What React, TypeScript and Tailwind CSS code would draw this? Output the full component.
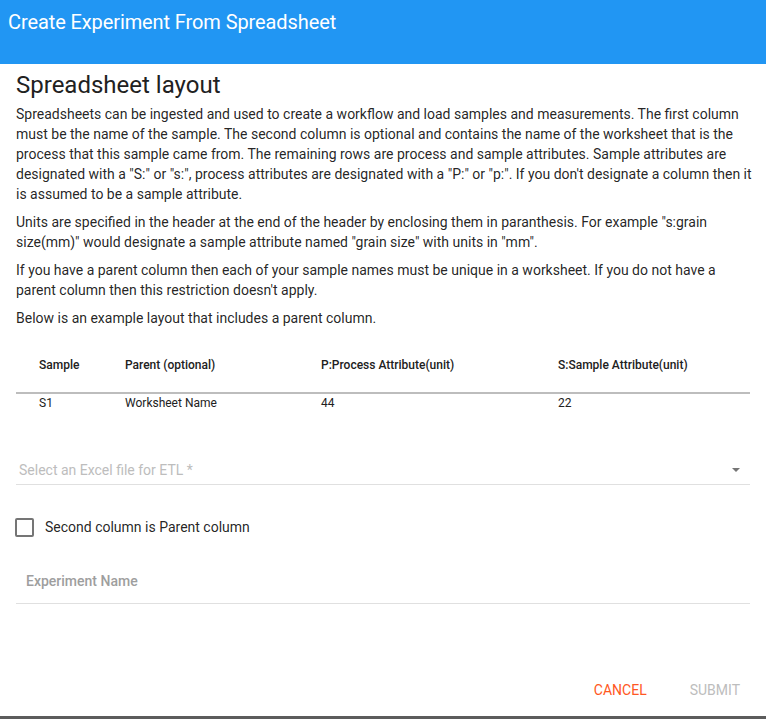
import * as React from 'react';

// 예시 시트 컬럼
const columns = [
  { label: 'Sample', width: 'w-[86px]' },
  { label: 'Parent (optional)', width: 'w-[196px]' },
  { label: 'P:Process Attribute(unit)', width: 'w-[237px]' },
  { label: 'S:Sample Attribute(unit)', width: 'flex-1' },
];

const sampleRow = ['S1', 'Worksheet Name', '44', '22'];

export default function App() {
  return (
    <div className="w-[766px] h-[719px] bg-white flex flex-col font-['Roboto',sans-serif] overflow-hidden">
      {/* 다이얼로그 헤더 */}
      <div className="h-[64px] shrink-0 bg-[#2196f3] px-2 pt-[8px]">
        <h3 className="text-[20px] leading-[28px] text-white font-normal tracking-[-0.1px]">
          Create Experiment From Spreadsheet
        </h3>
      </div>

      <div className="flex-1 flex flex-col px-4">
        <h2 className="text-[24px] leading-[32px] text-[#212121] mt-[5px]">Spreadsheet layout</h2>

        <div className="text-[14px] leading-[20px] text-[rgba(0,0,0,0.87)] flex flex-col gap-[8px] mt-[3px] -mr-[4px]">
          <p>
            Spreadsheets can be ingested and used to create a workflow and load samples and measurements. The first
            column must be the name of the sample. The second column is optional and contains the name of the
            worksheet that is the process that this sample came from. The remaining rows are process and sample
            attributes. Sample attributes are designated with a "S:" or "s:", process attributes are designated with a
            "P:" or "p:". If you don't designate a column then it is assumed to be a sample attribute.
          </p>
          <p>
            Units are specified in the header at the end of the header by enclosing them in paranthesis. For example
            "s:grain size(mm)" would designate a sample attribute named "grain size" with units in "mm".
          </p>
          <p>
            If you have a parent column then each of your sample names must be unique in a worksheet. If you do not
            have a parent column then this restriction doesn't apply.
          </p>
          <p>Below is an example layout that includes a parent column.</p>
        </div>

        {/* 예시 테이블 */}
        <div className="mt-[10px] text-[12px]">
          <div className="flex items-center h-[56px] border-b-2 border-[#bdbdbd]">
            {columns.map((c) => (
              <div key={c.label} className={`${c.width} pl-[23px] font-medium text-[#212121]`}>
                {c.label}
              </div>
            ))}
          </div>
          <div className="flex items-center h-[18px] text-[#212121]">
            {sampleRow.map((v, i) => (
              <div key={i} className={`${columns[i].width} pl-[23px]`}>
                {v}
              </div>
            ))}
          </div>
        </div>

        {/* 파일 선택 */}
        <div className="mt-[44px] h-[29px] flex items-center justify-between border-b border-[#e0e0e0]">
          <span className="text-[14px] text-[#bdbdbd] pl-[3px]">Select an Excel file for ETL *</span>
          <svg width="8" height="4" viewBox="0 0 8 4" className="mr-[10px]">
            <path d="M0 0 L8 0 L4 4 Z" fill="#757575" />
          </svg>
        </div>

        {/* 체크박스 */}
        <label className="mt-[32px] h-[20px] flex items-center gap-[11px]">
          <span className="w-[19px] h-[19px] border-2 border-[#757575] rounded-[2px] -ml-[1px]" />
          <span className="text-[14px] text-[rgba(0,0,0,0.87)]">Second column is Parent column</span>
        </label>

        {/* 실험 이름 */}
        <div className="mt-[34px] pb-[12px] border-b border-[#e0e0e0]">
          <div className="text-[14px] leading-[20px] font-medium text-[#9e9e9e] pl-[10px]">Experiment Name</div>
        </div>

        {/* 하단 버튼 */}
        <div className="mt-auto mb-[15px] flex justify-end items-center gap-[43px] pr-[10px] text-[14px]">
          <span className="text-[#ff5722] uppercase">Cancel</span>
          <span className="text-[#bdbdbd] uppercase">Submit</span>
        </div>
      </div>

      <div className="h-[3px] shrink-0 bg-[#5c5c5c]" />
    </div>
  );
}
